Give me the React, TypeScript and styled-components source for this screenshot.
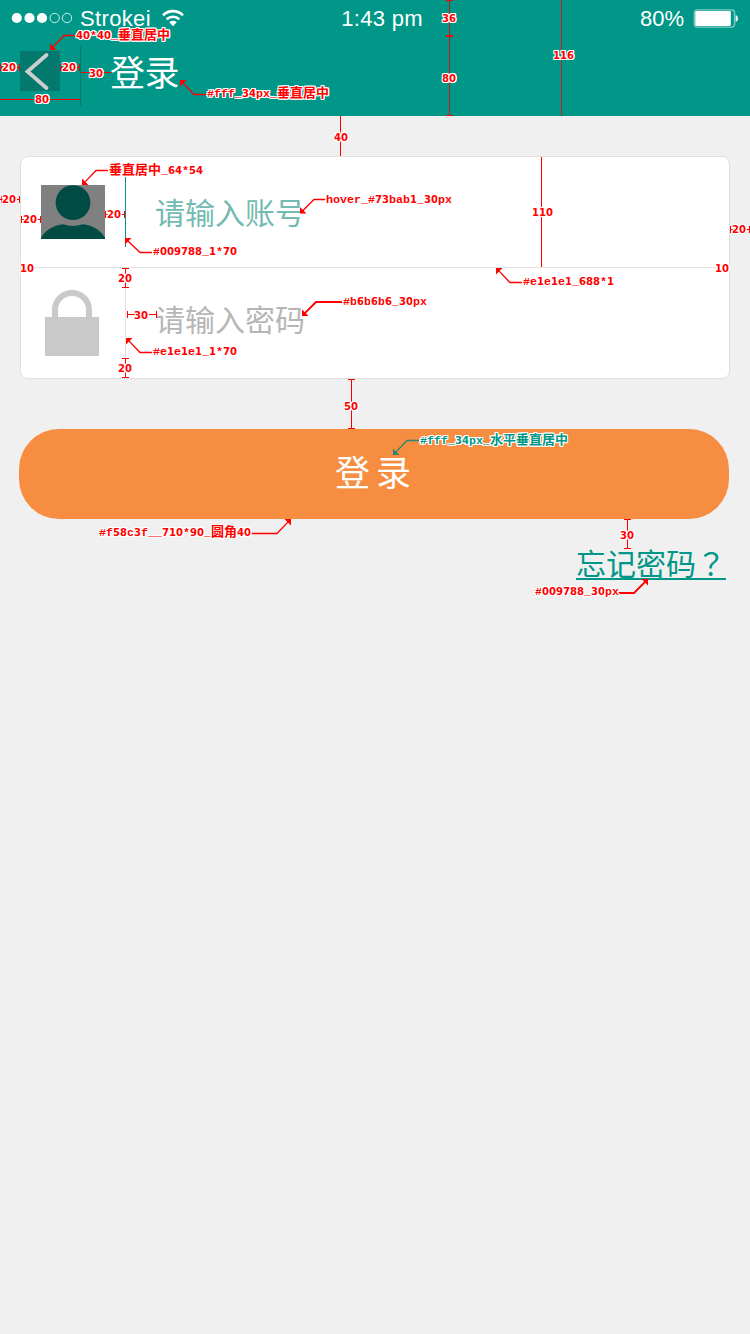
import React from "react";
import styled, { createGlobalStyle } from "styled-components";

const TEAL = "#009788";
const RED = "#ff0000";

const GlobalStyle = createGlobalStyle`
  * { box-sizing: border-box; }
  body {
    margin: 0;
    background: #f0f0f0;
    font-family: "Noto Sans CJK SC", sans-serif;
  }
`;

const Screen = styled.main`
  position: relative;
  width: 750px;
  height: 1334px;
  overflow: hidden;
  background: #f0f0f0;
`;

const Header = styled.header`
  height: 116px;
  background: ${TEAL};
  color: #fff;
`;

const StatusBar = styled.div`
  display: grid;
  grid-template-columns: 1fr auto 1fr;
  align-items: center;
  height: 36px;
  padding: 0 12px 0 11px;
  font-family: "Liberation Sans", sans-serif;
  font-size: 22px;
  line-height: 34px;
`;

const StatusGroup = styled.div<{ $end?: boolean }>`
  display: flex;
  align-items: center;
  justify-content: ${(p) => (p.$end ? "flex-end" : "flex-start")};
  gap: ${(p) => (p.$end ? "9px" : "7px")};
`;

const StatusText = styled.span<{ $spacing?: string }>`
  padding-top: 2px;
  letter-spacing: ${(p) => p.$spacing ?? "0"};
  white-space: nowrap;
`;

const Clock = styled.time`
  margin-left: 15px;
  padding-top: 2px;
  letter-spacing: 0.3px;
`;

const WifiSvg = styled.svg`
  margin-left: 4px;
`;

const NavBar = styled.nav`
  display: flex;
  align-items: center;
  height: 80px;
`;

const BackButton = styled.div`
  display: flex;
  width: 80px;
  height: 60px;
  padding: 0 0 10px 20px;
  align-items: center;
`;

const BackSvg = styled.svg`
  background: #03796d;
`;

const NavRule = styled.div`
  width: 1px;
  height: 60px;
  background: #027b6f;
`;

const Title = styled.h1`
  margin: 0 0 11px 29px;
  font-size: 35px;
  font-weight: 400;
  line-height: 50px;
  letter-spacing: -0.5px;
`;

const Card = styled.section`
  margin: 40px 20px 0;
  border: 1px solid #dfdfdf;
  border-radius: 8px;
  background: #fff;
`;

const FieldRow = styled.div`
  display: flex;
  align-items: center;
  height: 110px;
  padding-left: 20px;
`;

const FieldDivider = styled.div`
  height: 1px;
  margin: 0 10px;
  background: #e1e1e1;
`;

const FieldRule = styled.div<{ $color: string }>`
  width: 1px;
  height: 70px;
  margin: 0 29px 0 20px;
  background: ${(p) => p.$color};
`;

const FieldHint = styled.span<{ $color: string; $lift: number }>`
  padding-bottom: ${(p) => p.$lift}px;
  color: ${(p) => p.$color};
  font-size: 30px;
  font-weight: 400;
  line-height: 44px;
`;

const SubmitButton = styled.button`
  display: block;
  width: 710px;
  height: 90px;
  margin: 50px 0 0 19px;
  padding: 0 0 7px 4px;
  border: 0;
  border-radius: 40px;
  background: #f68d40;
  color: #fff;
  font-family: inherit;
  font-size: 35px;
  font-weight: 400;
  letter-spacing: 6px;
`;

const LinkRow = styled.div`
  display: flex;
  justify-content: flex-end;
  padding: 23px 24px 0 0;
`;

const ForgotLink = styled.a`
  height: 38px;
  border-bottom: 2px solid ${TEAL};
  color: ${TEAL};
  font-size: 30px;
  font-weight: 400;
  line-height: 40px;
`;

const CenteredMark = styled.span`
  font-family: "Noto Sans CJK TC", sans-serif;
  line-height: 0;
`;

const SpecLayer = styled.div`
  position: absolute;
  inset: 0;
  pointer-events: none;
`;

const SpecLines = styled.svg`
  position: absolute;
  inset: 0;
`;

const SpecLabel = styled.span<{ $x: number; $y: number; $color: string }>`
  position: absolute;
  left: ${(p) => p.$x}px;
  top: ${(p) => p.$y - 7}px;
  color: ${(p) => p.$color};
  font-family: "Liberation Mono", monospace;
  font-size: 11.67px;
  font-weight: 700;
  line-height: 16px;
  white-space: nowrap;
  text-shadow: 1px 0 #fff, -1px 0 #fff, 0 1px #fff, 0 -1px #fff,
    1px 1px #fff, -1px -1px #fff, 1px -1px #fff, -1px 1px #fff;
`;

const Han = styled.span`
  font-family: "Noto Sans CJK SC", sans-serif;
  font-size: 13px;
  line-height: 0;
`;

const Digits = styled.span`
  font-family: "DejaVu Sans Condensed", "DejaVu Sans", sans-serif;
  font-stretch: condensed;
  font-size: 11.18px;
  line-height: 0;
`;

type Label = { x: number; y: number; text: string; color?: string };

const labels: Label[] = [
  { x: 76, y: 35, text: "40*40_垂直居中" },
  { x: 207, y: 93, text: "#fff_34px_垂直居中" },
  { x: 109, y: 170, text: "垂直居中_64*54" },
  { x: 153, y: 251, text: "#009788_1*70" },
  { x: 326, y: 199, text: "hover_#73bab1_30px" },
  { x: 523, y: 281, text: "#e1e1e1_688*1" },
  { x: 343, y: 301, text: "#b6b6b6_30px" },
  { x: 153, y: 351, text: "#e1e1e1_1*70" },
  { x: 420, y: 440, text: "#fff_34px_水平垂直居中", color: TEAL },
  { x: 99, y: 532, text: "#f58c3f__710*90_圆角40" },
  { x: 535, y: 591, text: "#009788_30px" },
  { x: 2, y: 67, text: "20" },
  { x: 62, y: 67, text: "20" },
  { x: 35, y: 99, text: "80" },
  { x: 89, y: 73, text: "30" },
  { x: 442, y: 18, text: "36" },
  { x: 442, y: 78, text: "80" },
  { x: 553, y: 55, text: "116" },
  { x: 334, y: 137, text: "40" },
  { x: 2, y: 199, text: "20" },
  { x: 23, y: 219, text: "20" },
  { x: 107, y: 214, text: "20" },
  { x: 532, y: 212, text: "110" },
  { x: 732, y: 229, text: "20" },
  { x: 20, y: 268, text: "10" },
  { x: 715, y: 268, text: "10" },
  { x: 118, y: 278, text: "20" },
  { x: 134, y: 315, text: "30" },
  { x: 118, y: 368, text: "20" },
  { x: 344, y: 406, text: "50" },
  { x: 620, y: 535, text: "30" },
];

const measures = [
  // vertical spans with their end caps
  "M446 .5h7M446 35.5h7M446 36.5h7M446 115.5h7",
  "M340.5 116V156M541.5 157V267",
  "M351.5 379V429M348 379.5h7M348 428.5h7",
  "M627.5 519V549M624 519.5h7M624 548.5h7",
  "M125.5 268V288M122 268.5h7M122 287.5h7",
  "M125.5 358V378M122 358.5h7M122 377.5h7",
  // horizontal spans with their end caps
  "M0 67.5H20M.5 64v7M19.5 64v7M60 67.5H80M60.5 64v7M79.5 64v7",
  "M0 99.5H80M81 72.5H111",
  "M0 199.5H20M1.5 196v7M19.5 196v7",
  "M21 219.5H41M21.5 216v7M40.5 216v7",
  "M105 214.5H125M105.5 211v7M124.5 211v7",
  "M730 229.5H750M730.5 226v7M749.5 226v7",
  "M127 314.5H157M127.5 311v7M156.5 311v7",
].join("");

type LeaderSpec = {
  tip: [number, number];
  bend: [number, number];
  end: number;
  color?: string;
  heavy?: boolean;
};

const leaders: LeaderSpec[] = [
  { tip: [50, 50], bend: [64, 35.5], end: 76 },
  { tip: [180, 80], bend: [194, 94.5], end: 206 },
  { tip: [82, 185], bend: [96, 170.5], end: 108 },
  { tip: [125, 238], bend: [140, 252.5], end: 152 },
  { tip: [300, 213.5], bend: [314, 199.5], end: 326 },
  { tip: [496, 268], bend: [510, 282.5], end: 522 },
  { tip: [302, 316], bend: [316, 302], end: 342, heavy: true },
  { tip: [126, 338], bend: [140, 352.5], end: 152 },
  { tip: [393, 455], bend: [407, 440.5], end: 419, color: "#2f8573" },
  { tip: [291, 519], bend: [277, 533.5], end: 251 },
  { tip: [648, 579], bend: [634, 593], end: 618, heavy: true },
];

function Leader({ tip, bend, end, color = RED, heavy }: LeaderSpec) {
  const [x, y] = tip;
  const dx = Math.sign(bend[0] - x) * 6.5;
  const dy = Math.sign(bend[1] - y) * 6.5;
  return (
    <>
      <path
        d={`M${x + dx / 3} ${y + dy / 3}L${bend[0]} ${bend[1]}H${end}`}
        fill="none"
        stroke={color}
        strokeWidth={heavy ? 1.9 : 1.3}
      />
      <path d={`M${x} ${y}h${dx}L${x} ${y + dy}z`} fill={color} />
    </>
  );
}

function SpecText({ text }: { text: string }) {
  return (
    <>
      {text.split(/([\u4e00-\u9fff]+|[0-9]+)/).map((part, i) => {
        if (i % 2 === 0) return part;
        return /[0-9]/.test(part) ? (
          <Digits key={i}>{part}</Digits>
        ) : (
          <Han key={i}>{part}</Han>
        );
      })}
    </>
  );
}

function SpecOverlay() {
  return (
    <SpecLayer>
      <SpecLines width="750" height="1334" viewBox="0 0 750 1334">
        <path d={measures} stroke={RED} fill="none" shapeRendering="crispEdges" />
        <path d="M449.5 1V35M449.5 37V115" stroke="#c01f1b" shapeRendering="crispEdges" />
        <path d="M561.5 0V116" stroke="#bd2620" shapeRendering="crispEdges" />
        {leaders.map((l, i) => (
          <Leader key={i} {...l} />
        ))}
      </SpecLines>
      {labels.map((l, i) => (
        <SpecLabel key={i} $x={l.x} $y={l.y} $color={l.color ?? RED}>
          <SpecText text={l.text} />
        </SpecLabel>
      ))}
    </SpecLayer>
  );
}

function SignalDots() {
  return (
    <svg width="62" height="12" viewBox="0 0 62 12">
      {[5.8, 18.5, 31].map((x) => (
        <circle key={x} cx={x} cy="6" r="5.1" fill="#fff" />
      ))}
      {[43.7, 56].map((x) => (
        <circle key={x} cx={x} cy="6" r="4.7" fill="none" stroke="#fff" strokeWidth="0.8" />
      ))}
    </svg>
  );
}

function WifiIcon() {
  return (
    <WifiSvg width="22" height="18" viewBox="0 0 22 18">
      <g fill="none" stroke="#fff" strokeWidth="2.6">
        <path d="M1 6.2C6.8.7 15.2.7 21 6.2" />
        <path d="M4.7 10.3c3.7-3.4 8.9-3.4 12.6 0" />
      </g>
      <path d="M7.2 13.2c2.3-1.9 5.3-1.9 7.6 0L11 17.2z" fill="#fff" />
    </WifiSvg>
  );
}

function BatteryIcon() {
  return (
    <svg width="45" height="19" viewBox="0 0 45 19">
      <rect x="1.4" y=".9" width="40.2" height="17.2" rx="3" fill="none" stroke="#7fcbc3" strokeWidth="1.4" />
      <rect x="2.3" y="2" width="35.5" height="15" rx="1.2" fill="#fff" />
      <path d="M42.7 6.2c2.9 0 2.9 6.6 0 6.6z" fill="#fff" />
    </svg>
  );
}

function BackIcon() {
  return (
    <BackSvg width="40" height="40" viewBox="0 0 40 40">
      <path d="M26.500 4L7.500 20.500l19 16.500" fill="none" stroke="#cccfce" strokeWidth="3.8" strokeLinecap="round" />
    </BackSvg>
  );
}

function UserIcon() {
  return (
    <svg width="64" height="54" viewBox="0 0 64 54">
      <path d="M0 0h64v54H0z" fill="#808080" />
      <circle cx="32" cy="17.6" r="17.4" fill="#004c44" />
      <path d="M0 54v-1.500C5 44.500 13 40 22.500 39.200Q32 42.800 41.500 39.200C51 40 59 44.500 64 52.500V54z" fill="#004c44" />
    </svg>
  );
}

function LockIcon() {
  return (
    <svg width="64" height="66" viewBox="0 0 64 66">
      <path d="M4 27h54v39H4z" fill="#c9c9c9" />
      <path d="M14 28v-8.500a17 16.500 0 0 1 34 0V28" fill="none" stroke="#c9c9c9" strokeWidth="6" />
    </svg>
  );
}

export default function App() {
  return (
    <>
      <GlobalStyle />
      <Screen>
        <Header>
          <StatusBar>
            <StatusGroup>
              <SignalDots />
              <StatusText $spacing="0.35px">Strokei</StatusText>
              <WifiIcon />
            </StatusGroup>
            <Clock>1:43 pm</Clock>
            <StatusGroup $end>
              <StatusText>80%</StatusText>
              <BatteryIcon />
            </StatusGroup>
          </StatusBar>
          <NavBar>
            <BackButton>
              <BackIcon />
            </BackButton>
            <NavRule />
            <Title>登录</Title>
          </NavBar>
        </Header>
        <Card>
          <FieldRow>
            <UserIcon />
            <FieldRule $color={TEAL} />
            <FieldHint $color="#73bab1" $lift={2}>请输入账号</FieldHint>
          </FieldRow>
          <FieldDivider />
          <FieldRow>
            <LockIcon />
            <FieldRule $color="#e1e1e1" />
            <FieldHint $color="#b6b6b6" $lift={10}>请输入密码</FieldHint>
          </FieldRow>
        </Card>
        <SubmitButton type="button">登录</SubmitButton>
        <LinkRow>
          <ForgotLink>
            忘记密码<CenteredMark>？</CenteredMark>
          </ForgotLink>
        </LinkRow>
        <SpecOverlay />
      </Screen>
    </>
  );
}
